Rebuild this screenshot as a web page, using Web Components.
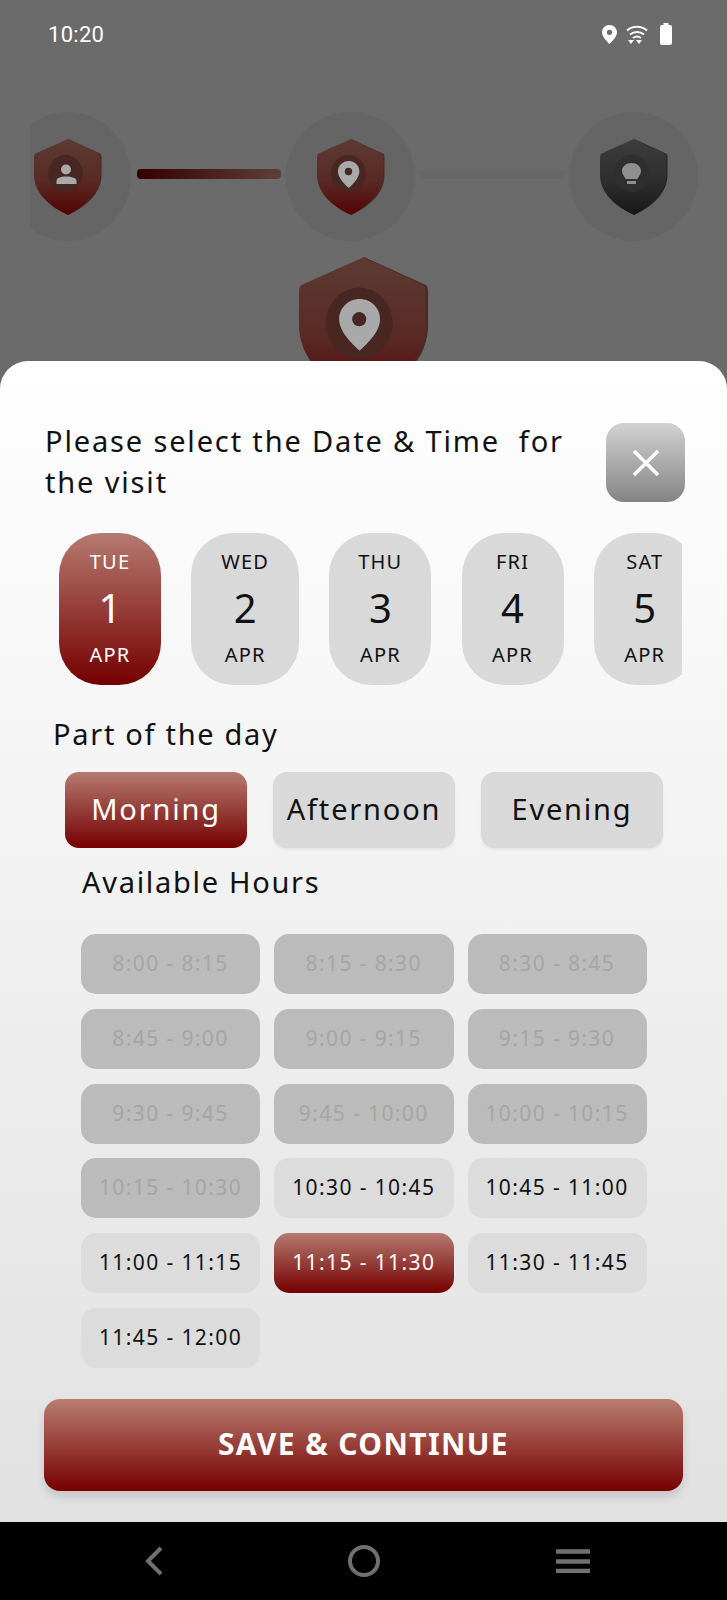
<!DOCTYPE html>
<html>
<head>
<meta charset="utf-8">
<title>Visit booking</title>
<style>
html, body { margin: 0; padding: 0; background: #6b6b6b; }
</style>
</head>
<body>
<visit-screen></visit-screen>

<template id="status-bar-template">
  <style>
    :host { display: flex; align-items: center; height: 68px; padding: 0 55px 0 48px; color: #fff; font: 400 22px Roboto, sans-serif; letter-spacing: .3px; }
    .time { flex: 1; }
    svg { display: block; }
    .pin { margin-right: 9px; }
    .wifi { margin-right: 12px; }
  </style>
  <span class="time">10:20</span>
  <svg class="pin" width="15" height="19" viewBox="0 0 15 19"><path fill="#fff" fill-rule="evenodd" d="M7.5 0C11.7 0 15 3.2 15 7.3 15 11.5 11 15.6 7.5 19 4 15.6 0 11.500 0 7.3 0 3.200 3.300 0 7.500 0ZM7.500 4.700a2.600 2.600 0 1 0 0 5.200 2.600 2.600 0 0 0 0-5.200Z"/></svg>
  <svg class="wifi" width="22" height="19" viewBox="0 0 22 19"><g fill="none" stroke="#fff" stroke-width="2"><path d="M1 5.500C6.800 .6 15.200 .6 21 5.500"/><path d="M4 9.500C8 6 14 6 18 9.500"/><path d="M7 13C9.300 11.300 12.700 11.300 15 13"/></g><path fill="#fff" d="M2 15h6l-3 4ZM10 15h6l-3 4Z"/></svg>
  <svg class="battery" width="12" height="22" viewBox="0 0 12 22"><path fill="#fff" d="M3.500 0h5v2H10a2 2 0 0 1 2 2v16a2 2 0 0 1-2 2H2a2 2 0 0 1-2-2V4a2 2 0 0 1 2-2h1.500Z"/></svg>
</template>

<template id="shield-badge-template">
  <style>
    :host { display: block; width: var(--shield-width, 68px); }
    svg { display: block; width: 100%; height: auto; overflow: visible; }
  </style>
  <svg viewBox="0 0 68 76">
    <defs>
      <linearGradient id="face" x1="0" y1="0" x2="0" y2="1">
        <stop class="a" offset="0"/><stop class="b" offset=".55"/><stop class="c" offset="1"/>
      </linearGradient>
    </defs>
    <path class="edge" d="M34 0 66 14.500Q67.500 15.300 67.500 18V36C67.500 55 50 69 34 76Z"/>
    <path fill="url(#face)" d="M34 .3 64.800 14.600Q66.200 15.400 66.200 18V36C66.200 54 49 68 34 76 18 69 0 55 0 36V18Q0 15.300 1.500 14.500L34 0Z"/>
    <ellipse class="well" cx="31.500" cy="34.500" rx="17.500" ry="18.500"/>
    <g class="glyph"></g>
  </svg>
</template>

<template id="step-tracker-template">
  <style>
    :host { display: flex; align-items: center; margin: 44px 0 0 30px; height: 129px; overflow: hidden; }
    .ring { flex: none; display: flex; align-items: center; justify-content: center; width: 129px; height: 129px; border-radius: 50%; background: #656565; }
    .ring.first { width: 126px; margin-left: -25px; }
    .line { flex: none; width: 144px; height: 10px; border-radius: 4px; margin-bottom: 6px; }
    .line.done { margin-left: 6px; margin-right: 5px; background: linear-gradient(90deg, #350000, #5e4037); }
    .line.todo { margin-left: 5px; margin-right: 5px; background: #676767; }
  </style>
  <div class="ring first"><shield-badge glyph="person"></shield-badge></div>
  <div class="line done"></div>
  <div class="ring"><shield-badge glyph="pin"></shield-badge></div>
  <div class="line todo"></div>
  <div class="ring"><shield-badge glyph="bulb" tone="dark"></shield-badge></div>
</template>

<template id="date-chip-template">
  <style>
    :host { flex: none; display: flex; flex-direction: column; align-items: center; justify-content: space-between; box-sizing: border-box; width: 102px; height: 152px; padding: 17px 0 18px; border-radius: 42px; background: #d9d9d9; color: #111; }
    :host([selected]) { background: linear-gradient(#b57a70, #750000); color: #fff; }
    .label { font-size: 20px; line-height: 24px; letter-spacing: 1.2px; }
    .day { font-size: 40px; line-height: 44px; margin-top: -2px; }
  </style>
  <span class="label"><slot name="weekday"></slot></span>
  <span class="day"><slot name="day"></slot></span>
  <span class="label"><slot name="month"></slot></span>
</template>

<template id="part-button-template">
  <style>
    :host { flex: none; display: flex; align-items: center; justify-content: center; box-sizing: border-box; width: 182px; height: 76px; padding-bottom: 3px; border-radius: 14px; background: #d9d9d9; color: #111; font-size: 29px; letter-spacing: 1.8px; box-shadow: 0 2px 3px rgba(0,0,0,.06); }
    :host([selected]) { background: linear-gradient(#b57a70, #750000); color: #fff; box-shadow: none; }
  </style>
  <slot></slot>
</template>

<template id="hour-slot-template">
  <style>
    :host { display: flex; align-items: center; justify-content: center; box-sizing: border-box; height: 60px; padding-bottom: 2px; border-radius: 15px; background: #dcdcdc; color: #111; font-size: 21px; letter-spacing: 1.400px; }
    :host([disabled]) { background: #bbb; color: #a5a5a5; }
    :host([selected]) { background: linear-gradient(#b57a70, #750000); color: #fff; }
  </style>
  <slot></slot>
</template>

<template id="booking-sheet-template">
  <style>
    :host { display: block; box-sizing: border-box; height: 1161px; padding-top: 60px; border-radius: 28px 28px 0 0; background: linear-gradient(#fff, #e1e1e1); color: #111; font-family: "Noto Sans", sans-serif; }
    .head { display: flex; align-items: flex-start; padding: 0 42px 0 45px; }
    .title { flex: 1; margin-top: -1px; font-size: 29px; line-height: 41px; letter-spacing: 1.850px; white-space: pre-wrap; }
    .close { flex: none; display: flex; align-items: center; justify-content: center; width: 79px; height: 79px; margin-top: 2px; border-radius: 18px; background: linear-gradient(#d2d2d2, #848484); }
    .dates { display: flex; gap: 30.2px; width: 623px; margin: 31px 0 0 59px; overflow: hidden; }
    .sub { font-size: 29px; line-height: 40px; letter-spacing: 1.700px; }
    .part-title { margin: 29px 0 0 53px; }
    .parts { display: flex; gap: 26px; margin: 18px 0 0 65px; }
    .hours-title { margin: 14px 0 0 82px; }
    .hours { display: grid; grid-template-columns: 179px 179.500px 179px; gap: 14.8px 14px; margin: 32px 0 0 81px; }
    .save { display: flex; align-items: center; justify-content: center; box-sizing: border-box; height: 92px; margin: 31px 44px 0; padding-bottom: 2px; border-radius: 16px; background: linear-gradient(#b87d71, #760000); color: #fff; font-size: 30px; font-weight: 700; letter-spacing: 1.400px; box-shadow: 0 6px 10px rgba(0,0,0,.12); }
  </style>
  <div class="head">
    <div class="title">Please select the Date &amp; Time  for the visit</div>
    <div class="close"><svg width="28" height="28" viewBox="0 0 28 28"><path d="M2 2 26 26M26 2 2 26" stroke="#fff" stroke-width="3.500" fill="none"/></svg></div>
  </div>
  <div class="dates">
    <date-chip selected><span slot="weekday">TUE</span><span slot="day">1</span><span slot="month">APR</span></date-chip>
    <date-chip style="width:108px"><span slot="weekday">WED</span><span slot="day">2</span><span slot="month">APR</span></date-chip>
    <date-chip><span slot="weekday">THU</span><span slot="day">3</span><span slot="month">APR</span></date-chip>
    <date-chip><span slot="weekday">FRI</span><span slot="day">4</span><span slot="month">APR</span></date-chip>
    <date-chip><span slot="weekday">SAT</span><span slot="day">5</span><span slot="month">APR</span></date-chip>
  </div>
  <div class="sub part-title">Part of the day</div>
  <div class="parts">
    <part-button selected>Morning</part-button>
    <part-button>Afternoon</part-button>
    <part-button>Evening</part-button>
  </div>
  <div class="sub hours-title">Available Hours</div>
  <div class="hours">
    <hour-slot disabled>8:00 - 8:15</hour-slot>
    <hour-slot disabled>8:15 - 8:30</hour-slot>
    <hour-slot disabled>8:30 - 8:45</hour-slot>
    <hour-slot disabled>8:45 - 9:00</hour-slot>
    <hour-slot disabled>9:00 - 9:15</hour-slot>
    <hour-slot disabled>9:15 - 9:30</hour-slot>
    <hour-slot disabled>9:30 - 9:45</hour-slot>
    <hour-slot disabled>9:45 - 10:00</hour-slot>
    <hour-slot disabled>10:00 - 10:15</hour-slot>
    <hour-slot disabled>10:15 - 10:30</hour-slot>
    <hour-slot>10:30 - 10:45</hour-slot>
    <hour-slot>10:45 - 11:00</hour-slot>
    <hour-slot>11:00 - 11:15</hour-slot>
    <hour-slot selected>11:15 - 11:30</hour-slot>
    <hour-slot>11:30 - 11:45</hour-slot>
    <hour-slot>11:45 - 12:00</hour-slot>
  </div>
  <div class="save">SAVE &amp; CONTINUE</div>
</template>

<template id="nav-bar-template">
  <style>
    :host { display: flex; align-items: center; justify-content: space-between; box-sizing: border-box; height: 78px; padding: 0 137px 0 145px; background: #000; }
    svg { display: block; }
    .home { margin-left: 9px; }
  </style>
  <svg width="18" height="30" viewBox="0 0 18 30"><path d="M16 2 3 15 16 28" fill="none" stroke="#707070" stroke-width="4"/></svg>
  <svg class="home" width="32" height="32" viewBox="0 0 32 32"><circle cx="16" cy="16" r="14" fill="none" stroke="#707070" stroke-width="4"/></svg>
  <svg width="34" height="24" viewBox="0 0 34 24"><path d="M0 2.500H34M0 12.500H34M0 22H34" stroke="#707070" stroke-width="4.500"/></svg>
</template>

<template id="visit-screen-template">
  <style>
    :host { display: block; width: 727px; height: 1600px; overflow: hidden; background: #6b6b6b; }
    .top { height: 361px; overflow: hidden; }
    .big { display: flex; justify-content: center; margin-top: 16px; --shield-width: 130px; }
  </style>
  <div class="top">
    <status-bar></status-bar>
    <step-tracker></step-tracker>
    <div class="big"><shield-badge glyph="pin"></shield-badge></div>
  </div>
  <booking-sheet></booking-sheet>
  <nav-bar></nav-bar>
</template>

<script>
// every plain component is just a template stamped into an open shadow root
function defineFromTemplate(tag, templateId) {
  customElements.define(tag, class extends HTMLElement {
    constructor() {
      super();
      this.attachShadow({ mode: 'open' });
      const tpl = document.getElementById(templateId);
      this.shadowRoot.appendChild(tpl.content.cloneNode(true));
    }
  });
}

const GLYPHS = {
  person: (ink) => `<circle cx="32" cy="30.500" r="5" fill="${ink}"/><path fill="${ink}" d="M22.500 45V42C22.500 39 26 37.500 32 37.500S42.500 39 42.500 42V45Z"/>`,
  pin: (ink, well) => `<path fill="${ink}" d="M31.700 22C37.500 22 42.400 26.500 42.400 32.500 42.400 39 36 45 31.700 49 27.500 45 21 39 21 32.500 21 26.500 26 22 31.700 22Z"/><circle cx="31.500" cy="32.500" r="3.700" fill="${well}"/>`,
  bulb: (ink) => `<path fill="${ink}" d="M31.500 24C36.700 24 41 27.500 41 32 41 35.500 38.500 37 37.500 40H25.500C24.500 37 22 35.500 22 32 22 27.500 26.300 24 31.500 24Z"/><rect x="27" y="42" width="9" height="3" fill="${ink}"/>`
};

class ShieldBadge extends HTMLElement {
  constructor() {
    super();
    this.attachShadow({ mode: 'open' });
    const tpl = document.getElementById('shield-badge-template');
    this.shadowRoot.appendChild(tpl.content.cloneNode(true));
  }

  connectedCallback() {
    const dark = this.getAttribute('tone') === 'dark';
    const colors = dark
      ? ['#3d3d3d', '#2e2e2e', '#171717', '#262626', '#2f2f2f', '#8f8f8f']
      : ['#5c3b33', '#5a2a24', '#520303', '#4a2a24', '#482622', '#a9a9a9'];
    const root = this.shadowRoot;
    root.querySelector('.a').setAttribute('stop-color', colors[0]);
    root.querySelector('.b').setAttribute('stop-color', colors[1]);
    root.querySelector('.c').setAttribute('stop-color', colors[2]);
    root.querySelector('.edge').setAttribute('fill', colors[3]);
    root.querySelector('.well').setAttribute('fill', colors[4]);
    root.querySelector('.glyph').innerHTML = GLYPHS[this.getAttribute('glyph')](colors[5], colors[4]);
  }
}

customElements.define('shield-badge', ShieldBadge);
defineFromTemplate('status-bar', 'status-bar-template');
defineFromTemplate('step-tracker', 'step-tracker-template');
defineFromTemplate('date-chip', 'date-chip-template');
defineFromTemplate('part-button', 'part-button-template');
defineFromTemplate('hour-slot', 'hour-slot-template');
defineFromTemplate('booking-sheet', 'booking-sheet-template');
defineFromTemplate('nav-bar', 'nav-bar-template');
defineFromTemplate('visit-screen', 'visit-screen-template');
</script>
</body>
</html>
